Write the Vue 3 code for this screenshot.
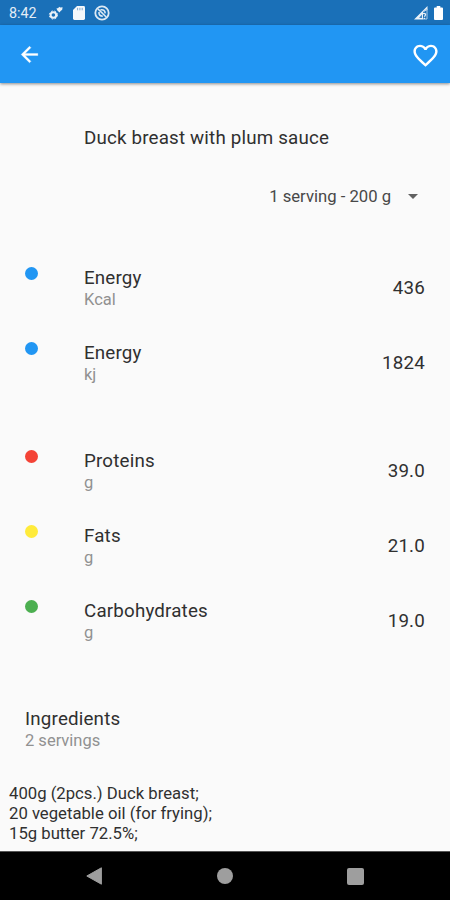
<script setup>
const energy = [
  { name: 'Energy', unit: 'Kcal', value: '436', tone: 'blue' },
  { name: 'Energy', unit: 'kj', value: '1824', tone: 'blue' },
]
const nutrients = [
  { name: 'Proteins', unit: 'g', value: '39.0', tone: 'red' },
  { name: 'Fats', unit: 'g', value: '21.0', tone: 'yellow' },
  { name: 'Carbohydrates', unit: 'g', value: '19.0', tone: 'green' },
]
const groups = [energy, nutrients]
const ingredients = ['400g (2pcs.) Duck breast;', '20 vegetable oil (for frying);', '15g butter 72.5%;']
</script>

<template>
  <div class="screen">
    <header class="status">
      <span class="clock">8:42</span>
      <svg class="gears" width="16" height="16" viewBox="0 0 16 16">
        <circle cx="5.4" cy="10" r="2.8" fill="none" stroke="#e9f1f8" stroke-width="2" />
        <circle cx="5.4" cy="10" r="4.1" fill="none" stroke="#e9f1f8" stroke-width="1" stroke-dasharray="1.6 1.7" />
        <path d="M8.4 3.6 10.4 2.9 11 1.8 12.4 2.5 14.6 2.2 14.2 4.8 12.6 6 11.5 7.6 9.4 5.6Z" fill="#e9f1f8" />
      </svg>
      <svg class="card" width="12" height="14" viewBox="0 0 12 14">
        <path d="M4 0H10.6Q12 0 12 1.4V12.6Q12 14 10.6 14H1.4Q0 14 0 12.6V4Z" fill="#f4f8fb" />
        <path d="M4.6 1.8V4.3M6.9 1.8V4.3M9.2 1.8V4.3" stroke="#7fa9d0" stroke-width="1" />
      </svg>
      <svg class="sync" width="16" height="16" viewBox="0 0 16 16">
        <circle cx="8" cy="8" r="6.7" fill="none" stroke="#dce9f4" stroke-width="1.8" />
        <path d="M4 4 12.2 12M5 7Q4.6 11.2 8.8 11.2M6.5 4.8Q11 4 11.2 8.4M7.2 7 9 8.8" fill="none" stroke="#dce9f4" stroke-width="1.6" />
      </svg>
      <span class="grow"></span>
      <svg class="signal" width="14" height="14" viewBox="0 0 14 14">
        <path d="M0 13.5 13.5 0V4L9 6V13.5Z" fill="#e9f1f8" />
        <path d="M5.5 11.2 8 8.6V12H5.5Z" fill="#4286c1" />
        <path d="M9 6 13 3V13H9" fill="none" stroke="#a9c9e5" stroke-width="1" />
        <path d="M9 7.6Q12.4 7 11.2 9.4L10.4 10.8M10.4 11.8V13" fill="none" stroke="#e9f1f8" stroke-width="1.3" />
      </svg>
      <svg class="battery" width="9" height="14" viewBox="0 0 9 14">
        <path d="M2.7 0H6.3V1.4H8Q9 1.4 9 2.4V13Q9 14 8 14H1Q0 14 0 13V2.4Q0 1.4 1 1.4H2.7Z" fill="#fff" />
      </svg>
    </header>

    <nav class="appbar">
      <svg width="25" height="25" viewBox="0 0 24 24">
        <path d="M20 11H7.83l5.59-5.59L12 4l-8 8 8 8 1.41-1.41L7.83 13H20v-2z" fill="#fff" stroke="#fff" stroke-width=".3" />
      </svg>
      <svg class="heart" width="29" height="29" viewBox="0 0 24 24">
        <path d="M16.5 3c-1.74 0-3.41.81-4.5 2.09C10.91 3.81 9.24 3 7.5 3 4.42 3 2 5.42 2 8.5c0 3.78 3.4 6.86 8.55 11.54L12 21.35l1.45-1.32C18.6 15.36 22 12.28 22 8.5 22 5.42 19.58 3 16.5 3zm-4.4 15.55l-.1.1-.1-.1C7.14 14.24 4 11.39 4 8.5 4 6.5 5.5 5 7.5 5c1.54 0 3.04.99 3.57 2.36h1.87C13.46 5.99 14.96 5 16.5 5c2 0 3.5 1.5 3.5 3.5 0 2.89-3.14 5.74-7.9 10.05z" fill="#fff" />
      </svg>
    </nav>

    <main class="content">
      <h1 class="dish">Duck breast with plum sauce</h1>
      <div class="portion">
        <span>1 serving - 200 g</span>
        <svg width="10" height="5" viewBox="0 0 10 5"><path d="M0 0H10L5 5Z" fill="#616161" /></svg>
      </div>
      <section v-for="(group, i) in groups" :key="i" class="group">
        <div v-for="row in group" :key="row.name + row.unit" class="row">
          <span class="dot" :class="row.tone"></span>
          <div class="label">
            <div class="name">{{ row.name }}</div>
            <div class="unit">{{ row.unit }}</div>
          </div>
          <span class="value">{{ row.value }}</span>
        </div>
      </section>
      <div class="row heading">
        <div class="label">
          <div class="name">Ingredients</div>
          <div class="unit">2 servings</div>
        </div>
      </div>
      <div class="ingredients">
        <div v-for="item in ingredients" :key="item">{{ item }}</div>
      </div>
    </main>

    <footer class="navbar">
      <svg width="16" height="18" viewBox="0 0 16 18"><path d="M15.4 .8V17.2L.8 9Z" fill="#9e9e9e" stroke="#9e9e9e" stroke-width="1" stroke-linejoin="round" /></svg>
      <span class="home"></span>
      <span class="recent"></span>
    </footer>
  </div>
</template>

<style>
body { margin: 0; background: #fafafa; }
</style>

<style scoped>
.screen {
  width: 450px;
  height: 900px;
  display: flex;
  flex-direction: column;
  overflow: hidden;
  background: #fafafa;
  color: #303030;
  font-family: Roboto, sans-serif;
}
svg { display: block; flex: none; }
.status {
  box-sizing: border-box;
  height: 25px;
  flex: none;
  display: flex;
  align-items: center;
  padding: 1px 7px 0 9px;
  background: #1a70b8;
}
.clock { width: 39px; font-size: 14.3px; line-height: 20px; color: #e3edf6; }
.card { margin-left: 9px; }
.sync { margin-left: 9px; }
.grow { flex: 1; }
.battery { margin-left: 6px; }
.appbar {
  box-sizing: border-box;
  height: 58px;
  flex: none;
  display: flex;
  align-items: center;
  justify-content: space-between;
  padding: 1px 10px 0 17px;
  background: #2196f3;
  box-shadow: 0 1px 3px rgba(0, 0, 0, .45);
  z-index: 1;
}
.heart { margin-top: 1px; }
.content { flex: 1; min-height: 0; overflow: hidden; }
.dish {
  margin: 44px 0 0 84px;
  font-size: 18.75px;
  font-weight: 400;
  line-height: 22px;
  letter-spacing: .18px;
  white-space: nowrap;
}
.portion {
  display: flex;
  align-items: center;
  justify-content: flex-end;
  gap: 17px;
  height: 24px;
  margin-top: 35px;
  padding-right: 32px;
  font-size: 16.67px;
  color: #484848;
}
.group { padding-top: 33px; }
.group:first-of-type { padding-top: 42px; }
.row {
  box-sizing: border-box;
  height: 75px;
  display: flex;
  padding: 17px 25px 0 25px;
}
.dot {
  width: 13px;
  height: 13px;
  margin: 0 46px 0 0;
  border-radius: 50%;
}
.blue { background: #2196f3; }
.red { background: #f44336; }
.yellow { background: #ffeb3b; }
.green { background: #4caf50; }
.label { flex: 1; }
.name { font-size: 18.75px; line-height: 22px; letter-spacing: .18px; }
.unit { font-size: 16.5px; line-height: 22px; color: #919191; }
.value { padding-top: 10px; font-size: 18.75px; line-height: 22px; letter-spacing: .2px; }
.heading { margin-top: 33px; }
.ingredients {
  padding: 18px 9px 0;
  font-size: 16.7px;
  line-height: 20px;
}
.navbar {
  box-sizing: border-box;
  height: 49px;
  flex: none;
  display: flex;
  align-items: center;
  justify-content: space-between;
  padding: 0 86px;
  background: #000;
  border-top: 1px solid #555;
}
.home { width: 16px; height: 16px; border-radius: 50%; background: #9e9e9e; }
.recent { width: 17px; height: 17px; border-radius: 2px; background: #9e9e9e; }
</style>
